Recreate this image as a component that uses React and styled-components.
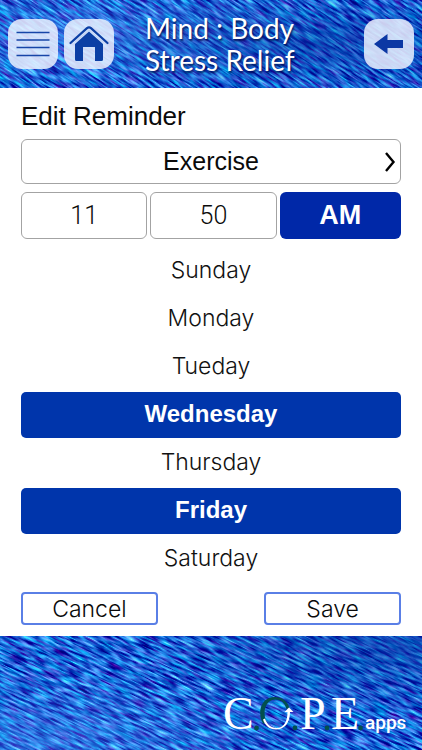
import { useState } from "react";
import styled, { createGlobalStyle, css } from "styled-components";

const SANS = `"Liberation Sans", Arial, sans-serif`;
const BLUE = "#0035ab";

const GlobalStyle = createGlobalStyle`
  * {
    box-sizing: border-box;
  }
  body {
    margin: 0;
    background: #fff;
    color: #0a0a0a;
    font-family: ${SANS};
  }
  button,
  input {
    margin: 0;
    padding: 0;
    font-family: inherit;
    color: inherit;
  }
  button {
    cursor: pointer;
  }
`;

const Page = styled.div`
  min-height: 100vh;
  display: flex;
  flex-direction: column;
`;

const furBand = css`
  position: relative;
  isolation: isolate;
  overflow: hidden;
  background: #1058cc;
`;

const Header = styled.header`
  ${furBand}
  display: flex;
  align-items: center;
  min-height: 88px;
  padding: 0 8px;
`;

const FurSvg = styled.svg`
  position: absolute;
  inset: 0;
  z-index: -1;
  width: 100%;
  height: 100%;
`;

const IconRow = styled.nav`
  display: flex;
  gap: 6px;
`;

const IconButton = styled.button`
  display: grid;
  place-items: center;
  width: 50px;
  height: 50px;
  border: 0;
  border-radius: 14px;
  background: rgba(240, 243, 255, 0.84);
`;

const Title = styled.div`
  flex: 1;
  padding-left: 31px;
  color: #fff;
  font-family: Lato, "Noto Sans", sans-serif;
  font-size: 28px;
  line-height: 32px;
  white-space: nowrap;
  text-shadow: 1px 2px 2px rgba(0, 10, 70, 0.8);
`;

const Form = styled.form`
  flex: 1;
  display: flex;
  flex-direction: column;
  padding: 12px 21px 10px;
`;

const Heading = styled.h1`
  margin: 0 0 6px;
  font-size: 26px;
  line-height: 33px;
  font-weight: 400;
`;

const outlined = css`
  border: 1px solid #a3a3a3;
  border-radius: 6px;
  background: #fff;
`;

const ActivityButton = styled.button`
  ${outlined}
  display: grid;
  grid-template-columns: 1fr auto 1fr;
  align-items: center;
  height: 45px;
  padding: 0 4px;
  font-size: 25px;

  span {
    grid-column: 2;
  }
  svg {
    justify-self: end;
  }
`;

const TimeRow = styled.div`
  display: grid;
  grid-template-columns: 26fr 26fr 25fr;
  gap: 3px;
  margin: 8px 0 9px;
`;

const TimeInput = styled.input`
  ${outlined}
  width: 100%;
  height: 47px;
  text-align: center;
  font-family: Roboto, ${SANS};
  font-weight: 300;
  font-size: 25px;
`;

const MeridiemButton = styled.button`
  height: 47px;
  border: 0;
  border-radius: 6px;
  background: #0028a8;
  color: #fff;
  font-size: 27px;
  font-weight: 700;
`;

const DayList = styled.div`
  display: flex;
  flex-direction: column;
  gap: 2px;
`;

const DayButton = styled.button`
  height: 46px;
  padding-bottom: 3px;
  border: 0;
  border-radius: 5px;
  font-size: ${(p) => (p.$on ? "24px" : "23px")};
  background: ${(p) => (p.$on ? BLUE : "transparent")};
  color: ${(p) => (p.$on ? "#fff" : "#111")};
  font-family: ${(p) => (p.$on ? SANS : `Inter, ${SANS}`)};
  font-weight: ${(p) => (p.$on ? 700 : 300)};
`;

const Actions = styled.div`
  display: flex;
  justify-content: space-between;
  margin-top: 10px;
`;

const ActionButton = styled.button`
  width: 36%;
  height: 33px;
  border: 2px solid #5a7fe6;
  border-radius: 4px;
  background: #fff;
  font-family: Inter, ${SANS};
  font-weight: 300;
  font-size: 23px;
  line-height: 28px;
`;

const Footer = styled.footer`
  ${furBand}
  display: flex;
  justify-content: flex-end;
  align-items: flex-end;
  min-height: 114px;
  padding: 0 12px 8px;
`;

// Streaky noise turned by `angle`, with soft light and dark patches over it
const Fur = ({ id, angle, seed, lightX, lightY, darkX, darkY }) => (
  <FurSvg aria-hidden="true">
    <defs>
      <filter id={`${id}-noise`} x="0" y="0" width="100%" height="100%" colorInterpolationFilters="sRGB">
        <feTurbulence type="fractalNoise" baseFrequency="0.055 0.45" numOctaves="3" seed={seed} />
        <feColorMatrix
          values="0.9 0.5 0 0 -0.59
                  0.2 1.7 0 0 -0.57
                  0.3 1.0 0 0 0.18
                  0 0 0 0 1"
        />
      </filter>
      <radialGradient id={`${id}-light`} cx={lightX} cy={lightY} r="0.6">
        <stop offset="0" stopColor="#5fa4ff" stopOpacity="0.34" />
        <stop offset="1" stopColor="#5fa4ff" stopOpacity="0" />
      </radialGradient>
      <radialGradient id={`${id}-dark`} cx={darkX} cy={darkY} r="0.6">
        <stop offset="0" stopColor="#00309a" stopOpacity="0.5" />
        <stop offset="1" stopColor="#00309a" stopOpacity="0" />
      </radialGradient>
    </defs>
    <g transform={`rotate(${angle})`}>
      <rect x="-100" y="-1000" width="2000" height="2000" filter={`url(#${id}-noise)`} />
    </g>
    <rect width="100%" height="100%" fill={`url(#${id}-light)`} />
    <rect width="100%" height="100%" fill={`url(#${id}-dark)`} />
  </FurSvg>
);

const MenuIcon = () => (
  <svg width="34" height="26" viewBox="0 0 34 26" stroke="#1745a8" strokeWidth="1.6">
    <path d="M0.5 1.5h33M0.5 9h33M0.5 16.5h33M0.5 24.5h33" />
  </svg>
);

const HomeIcon = () => (
  <svg width="40" height="36" viewBox="0 0 40 36">
    <path d="M6 18 20 5.500 34 18v15.500q0 1.500-1.500 1.500H26V21H14v14H7.500Q6 35 6 33.500z" fill="#0b3fa5" />
    <path
      d="M1.500 17 18 2.200q2-1.700 4 0L38.500 17"
      fill="none"
      stroke="#0b3fa5"
      strokeWidth="2.200"
      strokeLinecap="round"
    />
    <path d="M5.500 16.500 19 4.800q1-.8 2 0L34.500 16.500" fill="none" stroke="#b9cbf0" strokeWidth="0.8" />
  </svg>
);

const BackIcon = () => (
  <svg width="30" height="20" viewBox="0 0 30 20">
    <path d="M0 10 13.500 0v6H29v8H13.500v6z" fill="#0b38a4" />
  </svg>
);

const ChevronIcon = () => (
  <svg width="12" height="22" viewBox="0 0 12 22">
    <path d="M2 2 9.500 11 2 20" fill="none" stroke="#000" strokeWidth="2.400" />
  </svg>
);

const CopeLogo = () => (
  <svg width="188" height="60" viewBox="-2 -12 188 60" role="img" aria-label="C.O.P.E. apps">
    <g fill="#fff" fontFamily="'Liberation Serif', serif" fontSize="46">
      <text x="-1" y="35">C</text>
      <text x="76" y="35">P</text>
      <text x="107" y="35">E</text>
    </g>
    <g fill="#02504e">
      <circle cx="32.500" cy="34" r="2.400" />
      <circle cx="71" cy="34" r="2.400" />
      <circle cx="103" cy="34" r="2.400" />
      <circle cx="136.500" cy="34" r="2.400" />
      <path d="M39.500 30C33 20 36 3 51 3c7 0 12 3.500 14.500 11l-3 1C60.500 8.500 57 5.500 51.500 5.500 42 5.500 38 17 42.500 28z" />
    </g>
    <path
      d="M39 25.500c2 6 6.500 10 13 10 8.500 0 14-6.500 14-17.500h3.500L65 13.500 60.500 18h3C63.500 28 59.500 34 52.500 34c-5.500 0-9.500-3.500-11.500-9.500z"
      fill="#fff"
    />
    <text x="141" y="35" fill="#fff" fontFamily="Roboto, sans-serif" fontWeight="500" fontSize="19">
      apps
    </text>
  </svg>
);

const DAYS = ["Sunday", "Monday", "Tueday", "Wednesday", "Thursday", "Friday", "Saturday"];

const App = () => {
  const [hour, setHour] = useState("11");
  const [minute, setMinute] = useState("50");
  const [meridiem, setMeridiem] = useState("AM");
  const [selected, setSelected] = useState(["Wednesday", "Friday"]);

  const toggleDay = (day) =>
    setSelected((days) => (days.includes(day) ? days.filter((d) => d !== day) : [...days, day]));

  return (
    <Page>
      <GlobalStyle />
      <Header>
        <Fur id="top" angle={33} seed={4} lightX="0.2" lightY="0.4" darkX="0.75" darkY="0.5" />
        <IconRow>
          <IconButton type="button" aria-label="Menu">
            <MenuIcon />
          </IconButton>
          <IconButton type="button" aria-label="Home">
            <HomeIcon />
          </IconButton>
        </IconRow>
        <Title>
          Mind : Body
          <br />
          Stress Relief
        </Title>
        <IconButton type="button" aria-label="Back">
          <BackIcon />
        </IconButton>
      </Header>

      <Form onSubmit={(e) => e.preventDefault()}>
        <Heading>Edit Reminder</Heading>
        <ActivityButton type="button">
          <span>Exercise</span>
          <ChevronIcon />
        </ActivityButton>
        <TimeRow>
          <TimeInput aria-label="Hour" value={hour} onChange={(e) => setHour(e.target.value)} />
          <TimeInput aria-label="Minute" value={minute} onChange={(e) => setMinute(e.target.value)} />
          <MeridiemButton type="button" onClick={() => setMeridiem(meridiem === "AM" ? "PM" : "AM")}>
            {meridiem}
          </MeridiemButton>
        </TimeRow>
        <DayList role="group" aria-label="Days">
          {DAYS.map((day) => (
            <DayButton
              key={day}
              type="button"
              $on={selected.includes(day)}
              aria-pressed={selected.includes(day)}
              onClick={() => toggleDay(day)}
            >
              {day}
            </DayButton>
          ))}
        </DayList>
        <Actions>
          <ActionButton type="button">Cancel</ActionButton>
          <ActionButton type="submit">Save</ActionButton>
        </Actions>
      </Form>

      <Footer>
        <Fur id="bottom" angle={26} seed={9} lightX="0.1" lightY="0.9" darkX="0.95" darkY="0.1" />
        <CopeLogo />
      </Footer>
    </Page>
  );
};

export default App;
